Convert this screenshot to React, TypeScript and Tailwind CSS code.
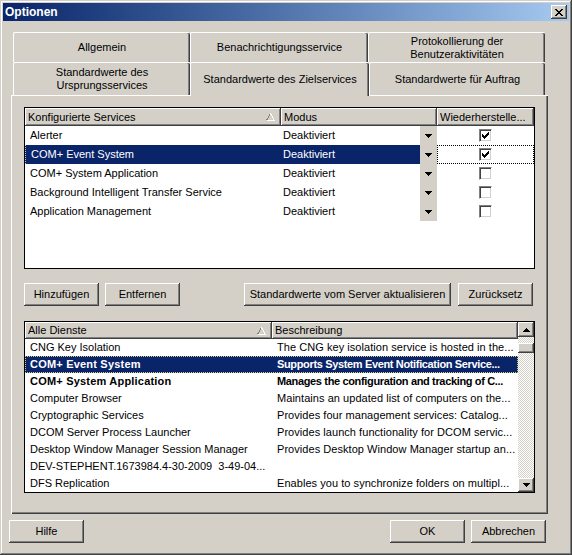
import React from "react";

const font = "font-['Liberation_Sans',Arial,sans-serif]";
const raised =
  "shadow-[inset_-1px_-1px_#404040,inset_1px_1px_#ffffff,inset_-2px_-2px_#808080,inset_2px_2px_#d4d0c8]";
const headerBevel = "shadow-[inset_-1px_-1px_#404040,inset_1px_1px_#ffffff,inset_-2px_-2px_#808080]";

interface ConfiguredRow {
  name: string;
  checked: boolean;
  selected?: boolean;
}

const configured: ConfiguredRow[] = [
  { name: "Alerter", checked: true },
  { name: "COM+ Event System", checked: true, selected: true },
  { name: "COM+ System Application", checked: false },
  { name: "Background Intelligent Transfer Service", checked: false },
  { name: "Application Management", checked: false },
];

interface ServiceRow {
  name: string;
  desc: string;
  bold?: boolean;
  selected?: boolean;
}

const services: ServiceRow[] = [
  { name: "CNG Key Isolation", desc: "The CNG key isolation service is hosted in the..." },
  { name: "COM+ Event System", desc: "Supports System Event Notification Service...", bold: true, selected: true },
  { name: "COM+ System Application", desc: "Manages the configuration and tracking of C...", bold: true },
  { name: "Computer Browser", desc: "Maintains an updated list of computers on the..." },
  { name: "Cryptographic Services", desc: "Provides four management services: Catalog..." },
  { name: "DCOM Server Process Launcher", desc: "Provides launch functionality for DCOM servic..." },
  { name: "Desktop Window Manager Session Manager", desc: "Provides Desktop Window Manager startup an..." },
  { name: "DEV-STEPHENT.1673984.4-30-2009  3-49-04...", desc: "" },
  { name: "DFS Replication", desc: "Enables you to synchronize folders on multipl..." },
];

function SortArrow() {
  return (
    <svg width="9" height="8" viewBox="0 0 9 8" className="shrink-0" shapeRendering="crispEdges">
      <path d="M0.5 7.5 L4.5 0.5" stroke="#808080" fill="none" />
      <path d="M4.5 0.5 L8.5 7.5 L0.5 7.5" stroke="#ffffff" fill="none" />
    </svg>
  );
}

function HeaderCell({ className, label, sort }: { className: string; label: string; sort?: boolean }) {
  return (
    <div className={`${className} h-full flex items-center pl-[3px] pr-[6px] bg-[#d4d0c8] ${headerBevel}`}>
      <span className="flex-1 truncate whitespace-nowrap">{label}</span>
      {sort && <SortArrow />}
    </div>
  );
}

function DownTri() {
  return (
    <svg width="7" height="4" viewBox="0 0 7 4" shapeRendering="crispEdges">
      <path d="M0 0h7v1H0z M1 1h5v1H1z M2 2h3v1H2z M3 3h1v1H3z" fill="#000" />
    </svg>
  );
}

function UpTri() {
  return (
    <svg width="7" height="4" viewBox="0 0 7 4" shapeRendering="crispEdges">
      <path d="M3 0h1v1H3z M2 1h3v1H2z M1 2h5v1H1z M0 3h7v1H0z" fill="#000" />
    </svg>
  );
}

function CheckBox({ checked }: { checked: boolean }) {
  return (
    <div className="w-[13px] h-[13px] bg-white border border-t-[#808080] border-l-[#808080] border-r-[#ffffff] border-b-[#ffffff] shadow-[inset_1px_1px_#404040,inset_-1px_-1px_#d4d0c8] flex items-center justify-center">
      {checked && (
        <svg width="7" height="7" viewBox="0 0 7 7" shapeRendering="crispEdges">
          <path
            d="M6 0h1v1H6z M5 1h2v1H5z M0 2h1v1H0z M4 2h3v1H4z M0 3h2v1H0z M3 3h3v1H3z M0 4h5v1H0z M1 5h3v1H1z M2 6h1v1H2z"
            fill="#000"
          />
        </svg>
      )}
    </div>
  );
}

function Button({ className, label }: { className: string; label: string }) {
  return (
    <button type="button" className={`${className} h-[23px] bg-[#d4d0c8] ${raised} flex items-center justify-center whitespace-nowrap`}>
      {label}
    </button>
  );
}

function Tab({ className, label, selected }: { className: string; label: React.ReactNode; selected?: boolean }) {
  return (
    <div
      className={`${className} ${
        selected ? "relative z-10 h-[34px]" : "h-full"
      } bg-[#d4d0c8] border-t border-l border-white rounded-t-[2px] shadow-[inset_-1px_0_#404040,inset_-2px_0_#808080] flex items-center justify-center text-center leading-[13px]`}
    >
      {label}
    </div>
  );
}

export default function App() {
  return (
    <div
      className={`w-[572px] h-[555px] bg-[#d4d0c8] p-[3px] flex flex-col text-[11px] text-black ${font} shadow-[inset_-1px_-1px_#404040,inset_1px_1px_#d4d0c8,inset_-2px_-2px_#808080,inset_2px_2px_#ffffff]`}
    >
      {/* Titelleiste */}
      <div className="h-[18px] flex items-center bg-gradient-to-r from-[#0a246a] to-[#a6caf0] pl-[2px] pr-[2px]">
        <span className="flex-1 text-white font-bold text-[12px]">Optionen</span>
        <button type="button" className={`w-[16px] h-[14px] bg-[#d4d0c8] ${raised} flex items-center justify-center`}>
          <svg width="8" height="7" viewBox="0 0 8 7" shapeRendering="crispEdges">
            <path
              d="M0 0h2v1H0z M6 0h2v1H6z M1 1h2v1H1z M5 1h2v1H5z M2 2h4v1H2z M3 3h2v1H3z M2 4h4v1H2z M1 5h2v1H1z M5 5h2v1H5z M0 6h2v1H0z M6 6h2v1H6z"
              fill="#000"
            />
          </svg>
        </button>
      </div>

      {/* Register */}
      <div className="mt-[11px] ml-[8px] w-[537px] flex flex-col">
        <div className="flex h-[30px] px-[2px]">
          <Tab className="w-[177px]" label="Allgemein" />
          <Tab className="w-[178px]" label="Benachrichtigungsservice" />
          <Tab className="w-[177px]" label={<span>Protokollierung der<br />Benutzeraktivitäten</span>} />
        </div>
        <div className="flex h-[33px] px-[2px]">
          <Tab className="w-[177px]" label={<span>Standardwerte des<br />Ursprungsservices</span>} />
          <Tab className="w-[179px]" label="Standardwerte des Zielservices" selected />
          <Tab className="w-[176px]" label="Standardwerte für Auftrag" />
        </div>

        {/* Panel */}
        <div className="h-[419px] border-t border-l border-white shadow-[inset_-1px_-1px_#404040,inset_-2px_-2px_#808080] pt-[11px] pl-[12px] flex flex-col">
          {/* Konfigurierte Services */}
          <div className="w-[511px] h-[162px] border border-black bg-white flex flex-col overflow-hidden">
            <div className="flex h-[18px] shrink-0">
              <HeaderCell className="w-[256px]" label="Konfigurierte Services" sort />
              <HeaderCell className="w-[156px]" label="Modus" />
              <HeaderCell className="w-[97px]" label="Wiederherstelle..." />
            </div>
            {configured.map((r) => (
              <div key={r.name} className="flex h-[19px] shrink-0">
                <div
                  className={`w-[256px] flex items-center pl-[5px] whitespace-nowrap ${
                    r.selected ? "bg-[#0a246a] text-white border-l border-dotted border-[#c8c8c8]" : ""
                  }`}
                >
                  {r.name}
                </div>
                <div className={`w-[139px] flex items-center pl-[2px] ${r.selected ? "bg-[#0a246a] text-white" : ""}`}>
                  Deaktiviert
                </div>
                <div className="w-[17px] bg-[#d4d0c8] flex items-center justify-center">
                  <DownTri />
                </div>
                <div
                  className={`w-[97px] flex items-center justify-center ${
                    r.selected ? "outline-1 outline-dotted outline-black -outline-offset-1" : ""
                  }`}
                >
                  <CheckBox checked={r.checked} />
                </div>
              </div>
            ))}
          </div>

          {/* Schaltflächen */}
          <div className="flex mt-[14px]">
            <Button className="w-[75px]" label="Hinzufügen" />
            <Button className="w-[75px] ml-[6px]" label="Entfernen" />
            <Button className="w-[207px] ml-[64px]" label="Standardwerte vom Server aktualisieren" />
            <Button className="w-[75px] ml-[7px]" label="Zurücksetz" />
          </div>

          {/* Alle Dienste */}
          <div className="mt-[15px] w-[511px] h-[172px] border border-black bg-white flex overflow-hidden">
            <div className="w-[493px] flex flex-col">
              <div className="flex h-[17px] shrink-0">
                <HeaderCell className="w-[247px]" label="Alle Dienste" sort />
                <HeaderCell className="w-[246px]" label="Beschreibung" />
              </div>
              {services.map((s) => (
                <div
                  key={s.name}
                  className={`flex h-[17px] shrink-0 items-center ${s.bold ? "font-bold" : ""} ${
                    s.selected ? "bg-[#0a246a] text-white outline-1 outline-dotted outline-[#d8c878] -outline-offset-1" : ""
                  }`}
                >
                  <div className={`w-[247px] pl-[5px] overflow-hidden whitespace-pre ${s.bold ? "tracking-[0.2px]" : ""}`}>
                    {s.name}
                  </div>
                  <div
                    className={`w-[246px] pl-[5px] pr-[1px] overflow-hidden whitespace-nowrap ${
                      s.bold ? "tracking-[-0.35px]" : "tracking-[0.05px]"
                    }`}
                  >
                    {s.desc}
                  </div>
                </div>
              ))}
            </div>
            {/* Bildlaufleiste */}
            <div className="w-[16px] flex flex-col bg-[repeating-conic-gradient(#ffffff_0_25%,#d4d0c8_0_50%)] bg-[length:2px_2px]">
              <div className={`h-[15px] bg-[#d4d0c8] ${raised} flex items-center justify-center`}>
                <UpTri />
              </div>
              <div className="h-[6px]" />
              <div className={`h-[10px] bg-[#d4d0c8] ${raised}`} />
              <div className="flex-1" />
              <div className={`h-[14px] bg-[#d4d0c8] ${raised} flex items-center justify-center`}>
                <DownTri />
              </div>
            </div>
          </div>
        </div>
      </div>

      {/* Untere Schaltflächen */}
      <div className="flex mt-[6px] ml-[6px] mr-[23px]">
        <Button className="w-[75px]" label="Hilfe" />
        <div className="flex-1" />
        <Button className="w-[75px]" label="OK" />
        <Button className="w-[75px] ml-[6px]" label="Abbrechen" />
      </div>
    </div>
  );
}
